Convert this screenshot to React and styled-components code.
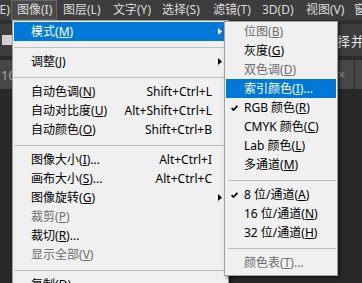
import styled, { createGlobalStyle } from "styled-components";

const GlobalStyle = createGlobalStyle`
  html, body {
    margin: 0;
    padding: 0;
  }
  body {
    width: 362px;
    height: 283px;
    overflow: hidden;
    background: #282828;
    font-family: "Noto Sans", "Noto Sans CJK SC", sans-serif;
  }
`;

const MAIN_ITEMS = [
  { label: "模式", key: "M", arrow: true, active: true },
  "sep",
  { label: "调整", key: "J", arrow: true },
  "sep",
  { label: "自动色调", key: "N", shortcut: "Shift+Ctrl+L" },
  { label: "自动对比度", key: "U", shortcut: "Alt+Shift+Ctrl+L" },
  { label: "自动颜色", key: "O", shortcut: "Shift+Ctrl+B" },
  "sep",
  { label: "图像大小", key: "I", dots: true, shortcut: "Alt+Ctrl+I" },
  { label: "画布大小", key: "S", dots: true, shortcut: "Alt+Ctrl+C" },
  { label: "图像旋转", key: "G", arrow: true },
  { label: "裁剪", key: "P", disabled: true },
  { label: "裁切", key: "R", dots: true },
  { label: "显示全部", key: "V", disabled: true },
  "sep",
  { label: "复制", key: "D", dots: true },
];

const MODE_ITEMS = [
  { label: "位图", key: "B", disabled: true },
  { label: "灰度", key: "G" },
  { label: "双色调", key: "D", disabled: true },
  { label: "索引颜色", key: "I", dots: true, active: true },
  { label: "RGB 颜色", key: "R", checked: true },
  { label: "CMYK 颜色", key: "C" },
  { label: "Lab 颜色", key: "L" },
  { label: "多通道", key: "M" },
  "sep",
  { label: "8 位/通道", key: "A", checked: true },
  { label: "16 位/通道", key: "N" },
  { label: "32 位/通道", key: "H" },
  "sep",
  { label: "颜色表", key: "T", dots: true, disabled: true },
];

// menu bar titles with the width each one takes in the bar
const BAR_ITEMS = [
  { name: "编辑(E)", w: 45 },
  { name: "图像(I)", w: 46, open: true },
  { name: "图层(L)", w: 50 },
  { name: "文字(Y)", w: 49 },
  { name: "选择(S)", w: 51 },
  { name: "滤镜(T)", w: 49 },
  { name: "3D(D)", w: 44 },
  { name: "视图(V)", w: 48 },
  { name: "窗口(W)", w: 50 },
];

function Label({ item }) {
  return (
    <LabelText>
      {item.label}(<u>{item.key}</u>){item.dots ? "..." : ""}
    </LabelText>
  );
}

function App() {
  return (
    <>
      <GlobalStyle />
      <Workspace>
        <MenuBar>
          {BAR_ITEMS.map((item) => (
            <BarItem key={item.name} $w={item.w} $open={item.open}>
              {item.name}
            </BarItem>
          ))}
        </MenuBar>

        <OptionsBar>
          <PresetSwatch />
          <OptionLabel>选择并遮住...</OptionLabel>
        </OptionsBar>

        <TabBar>
          <DocTab $width={355}>
            <TabTitle>100% (RGB/8#)</TabTitle>
            <TabClose>×</TabClose>
          </DocTab>
          <DocTab $width={40} />
        </TabBar>

        <Canvas />

        <Menu $left={12} $top={20} $width={217} $padTop={1} $padBottom={0}>
          {MAIN_ITEMS.map((item, i) =>
            item === "sep" ? (
              <Separator key={i} />
            ) : (
              <MainRow key={i} $active={item.active} $disabled={item.disabled}>
                <Label item={item} />
                <Shortcut>{item.shortcut}</Shortcut>
                <ArrowCell>
                  {item.arrow && (
                    <svg width="4" height="7" viewBox="0 0 4 7">
                      <polygon points="0,0 4,3.5 0,7" fill="currentColor" />
                    </svg>
                  )}
                </ArrowCell>
              </MainRow>
            )
          )}
        </Menu>

        <Menu $left={224} $top={21} $width={114} $padTop={0} $padBottom={3}>
          {MODE_ITEMS.map((item, i) =>
            item === "sep" ? (
              <Separator key={i} $inset={2} />
            ) : (
              <SubRow key={i} $active={item.active} $disabled={item.disabled}>
                <CheckCell>
                  {item.checked && (
                    <svg width="7" height="6" viewBox="0 0 7 6">
                      <path d="M0.6 3.1 L2.5 5 L6.4 0.8" fill="none" stroke="currentColor" strokeWidth="1.7" />
                    </svg>
                  )}
                </CheckCell>
                <Label item={item} />
              </SubRow>
            )
          )}
        </Menu>
      </Workspace>
    </>
  );
}

const Workspace = styled.div`
  position: relative;
  width: 362px;
  height: 283px;
  overflow: hidden;
  display: flex;
  flex-direction: column;
  background: #282828;
`;

const MenuBar = styled.div`
  display: flex;
  height: 20px;
  flex: 0 0 20px;
  margin-left: -34px;
  background: #3d3d3d;
`;

const BarItem = styled.div`
  box-sizing: border-box;
  flex: 0 0 ${(p) => p.$w}px;
  height: 20px;
  padding-left: 5px;
  font-size: 12px;
  line-height: 18px;
  white-space: nowrap;
  color: #dcdcdc;
  border: 1px solid ${(p) => (p.$open ? "#676767" : "transparent")};
  background: ${(p) => (p.$open ? "#4a4a4a" : "transparent")};
`;

const OptionsBar = styled.div`
  display: flex;
  align-items: center;
  height: 36px;
  flex: 0 0 36px;
  box-sizing: border-box;
  border-top: 4px solid #303030;
  background: #3d3d3d;
`;

const PresetSwatch = styled.div`
  flex: 0 0 10px;
  height: 10px;
  margin-left: 2px;
  background: #d2d2d2;
`;

const OptionLabel = styled.div`
  flex: 0 0 auto;
  margin-left: 311px;
  font-size: 13px;
  letter-spacing: 1px;
  white-space: nowrap;
  color: #e6e6e6;
`;

const TabBar = styled.div`
  display: flex;
  align-items: flex-end;
  height: 33px;
  flex: 0 0 33px;
  box-sizing: border-box;
  background: #2c2c2c;
`;

const DocTab = styled.div`
  display: flex;
  align-items: center;
  height: 29px;
  flex: 0 0 ${(p) => p.$width}px;
  box-sizing: border-box;
  border-right: 1px solid #2c2c2c;
  background: #474747;
`;

const TabTitle = styled.span`
  flex: 1;
  padding-left: 1px;
  font-size: 13px;
  color: #a8a8a8;
  white-space: nowrap;
`;

const TabClose = styled.span`
  width: 16px;
  font-size: 12px;
  color: #8c8c8c;
`;

const Canvas = styled.div`
  flex: 1;
  background: #282828;
`;

const Menu = styled.div`
  position: absolute;
  left: ${(p) => p.$left}px;
  top: ${(p) => p.$top}px;
  width: ${(p) => p.$width}px;
  box-sizing: border-box;
  padding: ${(p) => p.$padTop}px 1px ${(p) => p.$padBottom}px;
  border: 1px solid #a0a0a0;
  background: #f0f0f0;
  box-shadow: 2px 2px 3px rgba(0, 0, 0, 0.5);
  font-size: 12px;
  color: #000;
`;

const rowColor = (p) => (p.$active ? "#fff" : p.$disabled ? "#6d6d6d" : "#000");

const MainRow = styled.div`
  display: grid;
  grid-template-columns: 1fr auto 15px;
  align-items: center;
  height: 19px;
  line-height: 19px;
  padding-left: 17px;
  white-space: nowrap;
  color: ${rowColor};
  background: ${(p) => (p.$active ? "#0078d7" : "transparent")};
`;

const SubRow = styled.div`
  display: grid;
  grid-template-columns: 18px 1fr;
  align-items: center;
  height: 19px;
  line-height: 19px;
  white-space: nowrap;
  color: ${rowColor};
  background: ${(p) => (p.$active ? "#0078d7" : "transparent")};
`;

const LabelText = styled.span`
  u {
    text-underline-offset: 1px;
  }
`;

const Shortcut = styled.span`
  text-align: right;
`;

const ArrowCell = styled.span`
  display: flex;
  align-items: center;
  padding-left: 6px;
`;

const CheckCell = styled.span`
  display: flex;
  align-items: center;
  padding-left: 5px;
`;

const Separator = styled.div`
  height: 11px;
  box-sizing: border-box;
  padding-top: 6px;
  margin-left: ${(p) => p.$inset || 0}px;

  &::before {
    content: "";
    display: block;
    height: 1px;
    background: #bcbcbc;
  }
`;

export default App;
